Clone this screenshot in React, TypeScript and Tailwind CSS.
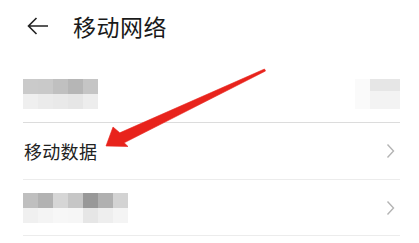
import React from 'react'

const ROW1_TOP = ['#cacaca', '#c9c9c9', '#c0c0c0', '#b6b6b6', '#c5c5c5']
const ROW1_BOTTOM = ['#efefef', '#ebebeb', '#e9e9e9', '#e6e6e6', '#ededed']
const ROW3_TOP = ['#bfbfbf', '#b2b2b2', '#d6d6d6', '#c6c6c6', '#989898', '#b0b0b0', '#d3d3d3']
const ROW3_BOTTOM = ['#f0f0f0', '#f4f4f4', '#f7f7f7', '#f6f6f6', '#e6e6e6', '#eeeeee', '#f4f4f4']

function Mosaic({ top, bottom }: { top: string[]; bottom: string[] }) {
  return (
    <div className="flex flex-col">
      <div className="flex">
        {top.map((c, i) => (
          <div key={i} className="w-[15px] h-[15px]" style={{ backgroundColor: c }} />
        ))}
      </div>
      <div className="flex">
        {bottom.map((c, i) => (
          <div key={i} className="w-[15px] h-[15px]" style={{ backgroundColor: c }} />
        ))}
      </div>
    </div>
  )
}

function Chevron() {
  return (
    <svg width="9" height="16" viewBox="0 0 9 16" className="mr-[5px]">
      <path d="M1.5 1.5 L7.5 8 L1.5 14.5" fill="none" stroke="#b4b4b4" strokeWidth="1.4" />
    </svg>
  )
}

export default function App() {
  return (
    <div
      className="relative w-[419px] h-[243px] overflow-hidden bg-white"
      style={{ fontFamily: '"Noto Sans CJK SC", "Noto Sans", sans-serif' }}
    >
      <header className="h-[52px] flex items-center pl-[27px] gap-[24px]">
        <svg width="22" height="18" viewBox="0 0 22 18">
          <path d="M21 9 H1.5 M9.5 1 L1.5 9 L9.5 17" fill="none" stroke="#222" strokeWidth="1.6" />
        </svg>
        <h1 className="text-[23px] leading-none text-[#1a1a1a] tracking-[0.5px]">移动网络</h1>
      </header>

      <div className="pl-[23px] pr-[19px]">
        <div className="h-[71px] flex items-end justify-between pb-[13px] border-b border-[#dcdcdc]">
          <Mosaic top={ROW1_TOP} bottom={ROW1_BOTTOM} />
          <div className="flex bg-[#fafafa] pl-[15px]">
            <div className="flex flex-col w-[30px]">
              <div className="h-[12px] bg-[#e6e6e6]" />
              <div className="h-[18px] bg-[#f3f3f3]" />
            </div>
          </div>
        </div>

        <div className="h-[57px] flex items-center justify-between border-b border-[#ececec]">
          <span className="text-[18px] leading-none text-[#222] pl-[1px] tracking-[0.3px]">移动数据</span>
          <Chevron />
        </div>

        <div className="h-[56px] flex items-center justify-between border-b border-[#ececec]">
          <Mosaic top={ROW3_TOP} bottom={ROW3_BOTTOM} />
          <Chevron />
        </div>
      </div>

      <svg className="absolute left-0 top-0 pointer-events-none" width="419" height="243" viewBox="0 0 419 243">
        <polygon
          points="106,146 113,127 119.8,132.8 264.5,69 265.5,71 124.2,142.8 128,146.5"
          fill="#e8231c"
          stroke="#e8231c"
          strokeWidth="0.6"
          strokeLinejoin="round"
        />
      </svg>
    </div>
  )
}
